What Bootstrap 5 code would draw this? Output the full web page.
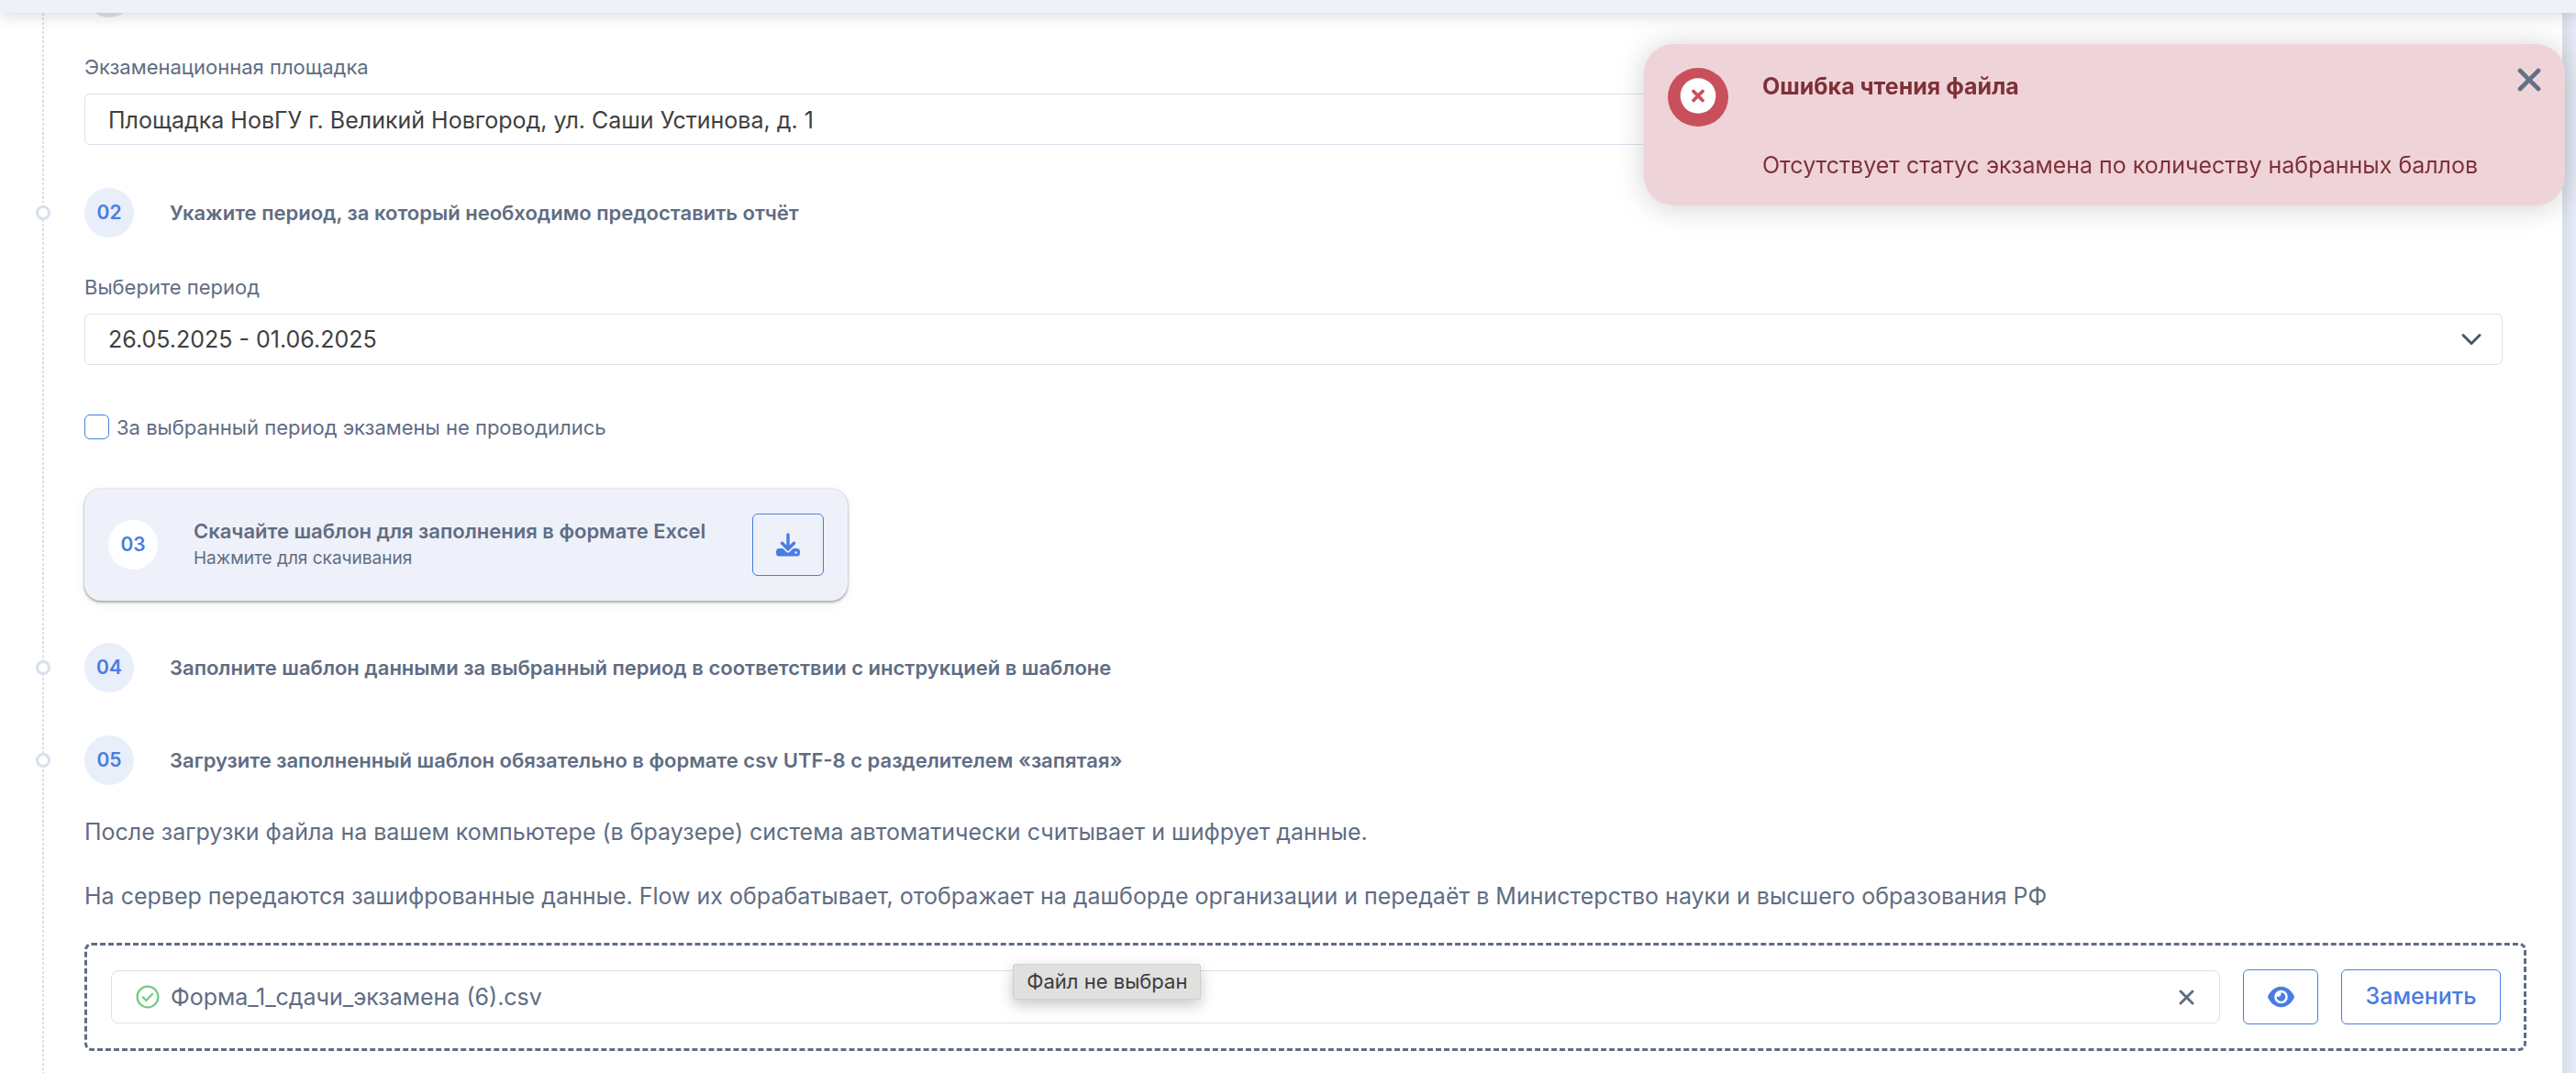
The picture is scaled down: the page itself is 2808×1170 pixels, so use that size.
<!DOCTYPE html>
<html lang="ru">
<head>
<meta charset="utf-8">
<meta name="viewport" content="width=device-width, initial-scale=1">
<title>Загрузка отчёта</title>
<link rel="stylesheet" href="https://cdn.jsdelivr.net/npm/bootstrap@5.3.0/dist/css/bootstrap.min.css">
<style>
  :root { --slate: #5f6d83; --blue: #487de2; --line: #d8e0ee; }
  body { font-family: Inter, "Noto Sans", sans-serif; font-size: 25px; line-height: 30px; color: var(--slate); background: #e8edf6; height: 100vh; overflow: hidden; }
  .topbar { height: 14px; background: #eef1f8; box-shadow: 0 0 20px rgba(0, 0, 0, .22); z-index: 10; }
  .panel { margin: -50px 15px 0 0; padding: 0 39px 0 46px; box-shadow: 0 0 20px rgba(70, 80, 110, .2); }
  .timeline { padding-left: 46px; min-height: calc(100vh + 50px); background: repeating-linear-gradient(#d8e0ee 0 3px, transparent 3px 5px) left top / 2px 100% no-repeat; }
  .fields { padding-right: 26px; }
  .step { height: 55px; gap: 39px; font-size: 22px; font-weight: 600; }
  .step-next { margin-top: 46px; }
  .step-after-card { margin-top: 45px; }
  .dot { width: 16px; height: 16px; left: -53px; top: 20px; border: 3px solid var(--line); background: #fff; }
  .num { width: 54px; height: 54px; background: #e9eefb; color: var(--blue); font-size: 21px; font-weight: 600; }
  .num-past { background: #dbe3f2; }
  .field-label { font-size: 22px; line-height: 24px; margin: 42px 0 17px; }
  .field-box { height: 56px; padding: 2px 25px 0; border: 1px solid var(--line); border-radius: 6px; font-size: 25px; color: #3f3f3f; }
  .form-select.field-box { background: #fff url("data:image/svg+xml,%3csvg xmlns='http://www.w3.org/2000/svg' viewBox='0 0 16 16'%3e%3cpath fill='none' stroke='%234c5568' stroke-linecap='round' stroke-linejoin='round' stroke-width='2' d='m2 5 6 6 6-6'/%3e%3c/svg%3e") no-repeat right 21px center / 24px 24px; }
  .check-row { margin: 54px 0; height: 27px; gap: 8px; font-size: 22px; }
  .check-row .form-check-input { width: 27px; height: 27px; margin: 0; border: 1px solid var(--blue); border-radius: 6px; }
  .download { width: 832px; max-width: 100%; height: 122px; padding: 0 26px; gap: 39px; border-radius: 18px; background: #eef1f9; box-shadow: 0 0 2px rgba(0, 0, 0, .25), 0 2px 3px rgba(0, 0, 0, .28), 0 3px 16px rgba(0, 0, 0, .05); }
  .download strong { display: block; font-size: 22px; font-weight: 600; }
  .download .hint { font-size: 19px; }
  .note-first { margin: 36px 0 40px; }
  .note-last { margin: 0 0 36px; }
  .tool { border: 1px solid var(--blue); border-radius: 6px; color: var(--blue); font-size: 25px; font-weight: 500; padding: 0; background: transparent; height: 60px; }
  .tool-icon { width: 82px; }
  .tool-text { width: 174px; }
  .download .tool { width: 78px; height: 68px; }
  .dropzone { border: 3px dashed #5f6d83; border-radius: 8px; padding: 26px 25px 26px 26px; gap: 25px; }
  .file-box { height: 58px; border: 1px solid var(--line); border-radius: 8px; padding: 0 27px 0 26px; gap: 12px; }
  .file-name { border: 0; outline: 0; font-size: 25px; color: var(--slate); min-width: 0; background: transparent; padding: 0; }
  .hint-pop { left: 38%; top: 20px; padding: 0 14px; height: 39px; line-height: 37px; font-size: 22px; color: #3c3c3c; background: #e0e0df; border: 1px solid #cfcfce; border-radius: 3px; box-shadow: 0 6px 16px rgba(0, 0, 0, .22); white-space: nowrap; }
  .alert-pop { top: 48px; right: 12px; width: 1004px; height: 176px; padding: 26px; border-radius: 32px; background: #eed4d8; color: #7f3038; box-shadow: 0 2px 32px rgba(0, 0, 0, .18); gap: 37px; z-index: 20; }
  .alert-pop .words { padding-top: 5px; gap: 56px; }
  .plain-btn { border: 0; padding: 0; background: transparent; line-height: 0; }
</style>
</head>
<body>
<header class="topbar sticky-top"></header>

<main class="panel bg-white">
  <div class="timeline">
    <div class="step d-flex align-items-center"><span class="num num-past rounded-circle"></span></div>
    <div class="fields">
      <label class="field-label d-block" for="site">Экзаменационная площадка</label>
      <input class="form-control field-box" id="site" type="text" value="Площадка НовГУ г. Великий Новгород, ул. Саши Устинова, д. 1">
    </div>

    <div class="step step-next position-relative d-flex align-items-center">
      <span class="dot position-absolute rounded-circle"></span>
      <span class="num rounded-circle d-flex align-items-center justify-content-center">02</span>
      <span>Укажите период, за который необходимо предоставить отчёт</span>
    </div>
    <div class="fields">
      <label class="field-label d-block" for="period">Выберите период</label>
      <select class="form-select field-box" id="period"><option>26.05.2025 - 01.06.2025</option></select>
    </div>

    <div class="check-row d-flex align-items-center">
      <input class="form-check-input" type="checkbox" id="none">
      <label for="none">За выбранный период экзамены не проводились</label>
    </div>

    <section class="download d-flex align-items-center">
      <span class="num rounded-circle bg-white d-flex align-items-center justify-content-center flex-shrink-0">03</span>
      <div><strong>Скачайте шаблон для заполнения в формате Excel</strong><span class="hint d-block">Нажмите для скачивания</span></div>
      <button class="tool btn ms-auto d-flex align-items-center justify-content-center" type="button" aria-label="Скачать">
        <svg width="26" height="26" viewBox="0 0 26 26" fill="none" stroke-linecap="round" stroke-linejoin="round">
          <rect x="0" y="17" width="26" height="8.5" rx="3.6" fill="#487de2"/>
          <path d="M5 10.5l8 8 8-8" stroke="#eef1f9" stroke-width="6"/>
          <path d="M13 2v16M6.5 11.3l6.5 6.5 6.5-6.5" stroke="#487de2" stroke-width="3.4"/>
          <circle cx="21.7" cy="21.5" r="1.3" fill="#eef1f9"/>
        </svg>
      </button>
    </section>

    <div class="step step-after-card position-relative d-flex align-items-center">
      <span class="dot position-absolute rounded-circle"></span>
      <span class="num rounded-circle d-flex align-items-center justify-content-center">04</span>
      <span>Заполните шаблон данными за выбранный период в соответствии с инструкцией в шаблоне</span>
    </div>
    <div class="step step-next position-relative d-flex align-items-center">
      <span class="dot position-absolute rounded-circle"></span>
      <span class="num rounded-circle d-flex align-items-center justify-content-center">05</span>
      <span>Загрузите заполненный шаблон обязательно в формате csv UTF-8 с разделителем «запятая»</span>
    </div>

    <p class="note-first">После загрузки файла на вашем компьютере (в браузере) система автоматически считывает и шифрует данные.</p>
    <p class="note-last">На сервер передаются зашифрованные данные. Flow их обрабатывает, отображает на дашборде организации и передаёт в Министерство науки и высшего образования РФ</p>

    <div class="dropzone position-relative d-flex align-items-center">
      <div class="file-box flex-grow-1 d-flex align-items-center">
        <svg width="26" height="26" viewBox="0 0 26 26" fill="none" stroke="#78cb84" stroke-width="2.3" stroke-linecap="round" stroke-linejoin="round"><circle cx="13" cy="13" r="11.4"/><path d="M7.8 13.2l3.6 3.8 6.8-7.2"/></svg>
        <input class="file-name flex-grow-1" type="text" readonly aria-label="Файл" value="Форма_1_сдачи_экзамена (6).csv">
        <button class="plain-btn" type="button" aria-label="Очистить"><svg width="17" height="17" viewBox="0 0 17 17" stroke="#5f6d83" stroke-width="2.9" stroke-linecap="round"><path d="M2 2l13 13M15 2L2 15"/></svg></button>
      </div>
      <button class="tool tool-icon btn d-flex align-items-center justify-content-center" type="button" aria-label="Просмотр">
        <svg width="29" height="26" viewBox="0 0 576 512" fill="#487de2"><path d="M288 32c-80.8 0-145.5 36.8-192.6 80.6C48.6 156 17.3 208 2.5 243.7c-3.3 7.9-3.3 16.7 0 24.6C17.3 304 48.6 356 95.4 399.4C142.5 443.2 207.2 480 288 480s145.5-36.8 192.6-80.6c46.8-43.5 78.1-95.4 93-131.1c3.3-7.9 3.3-16.7 0-24.6c-14.9-35.7-46.2-87.7-93-131.1C433.5 68.8 368.8 32 288 32zM144 256a144 144 0 1 1 288 0 144 144 0 1 1-288 0zm144-64c0 35.3-28.7 64-64 64c-7.1 0-13.9-1.2-20.3-3.3c-5.5-1.8-11.9 1.6-11.7 7.4c.3 6.9 1.3 13.8 3.2 20.7c13.7 51.2 66.4 81.6 117.6 67.9s81.6-66.4 67.9-117.6c-11.1-41.5-47.8-69.4-88.6-71.1c-5.8-.2-9.2 6.1-7.4 11.7c2.1 6.4 3.3 13.2 3.3 20.3z"/></svg>
      </button>
      <button class="tool tool-text btn" type="button">Заменить</button>
      <div class="hint-pop position-absolute" role="tooltip">Файл не выбран</div>
    </div>
  </div>
</main>

<div class="alert-pop position-absolute d-flex align-items-start" role="alert">
  <svg class="flex-shrink-0" width="66" height="64" viewBox="0 0 66 64"><ellipse cx="33" cy="32" rx="33" ry="32" fill="#c9505a"/><circle cx="33" cy="30.5" r="19.3" fill="#fff"/><path d="M28 25.5l10 10M38 25.5l-10 10" stroke="#c9505a" stroke-width="3.8" stroke-linecap="round"/></svg>
  <div class="words d-flex flex-column flex-grow-1">
    <strong>Ошибка чтения файла</strong>
    <span>Отсутствует статус экзамена по количеству набранных баллов</span>
  </div>
  <button class="plain-btn" type="button" aria-label="Закрыть"><svg width="26" height="26" viewBox="0 0 26 26" stroke="#637084" stroke-width="4.6" stroke-linecap="round"><path d="M3 3l20 20M23 3L3 23"/></svg></button>
</div>
<script src="https://cdn.jsdelivr.net/npm/bootstrap@5.3.0/dist/js/bootstrap.bundle.min.js"></script>
</body>
</html>
